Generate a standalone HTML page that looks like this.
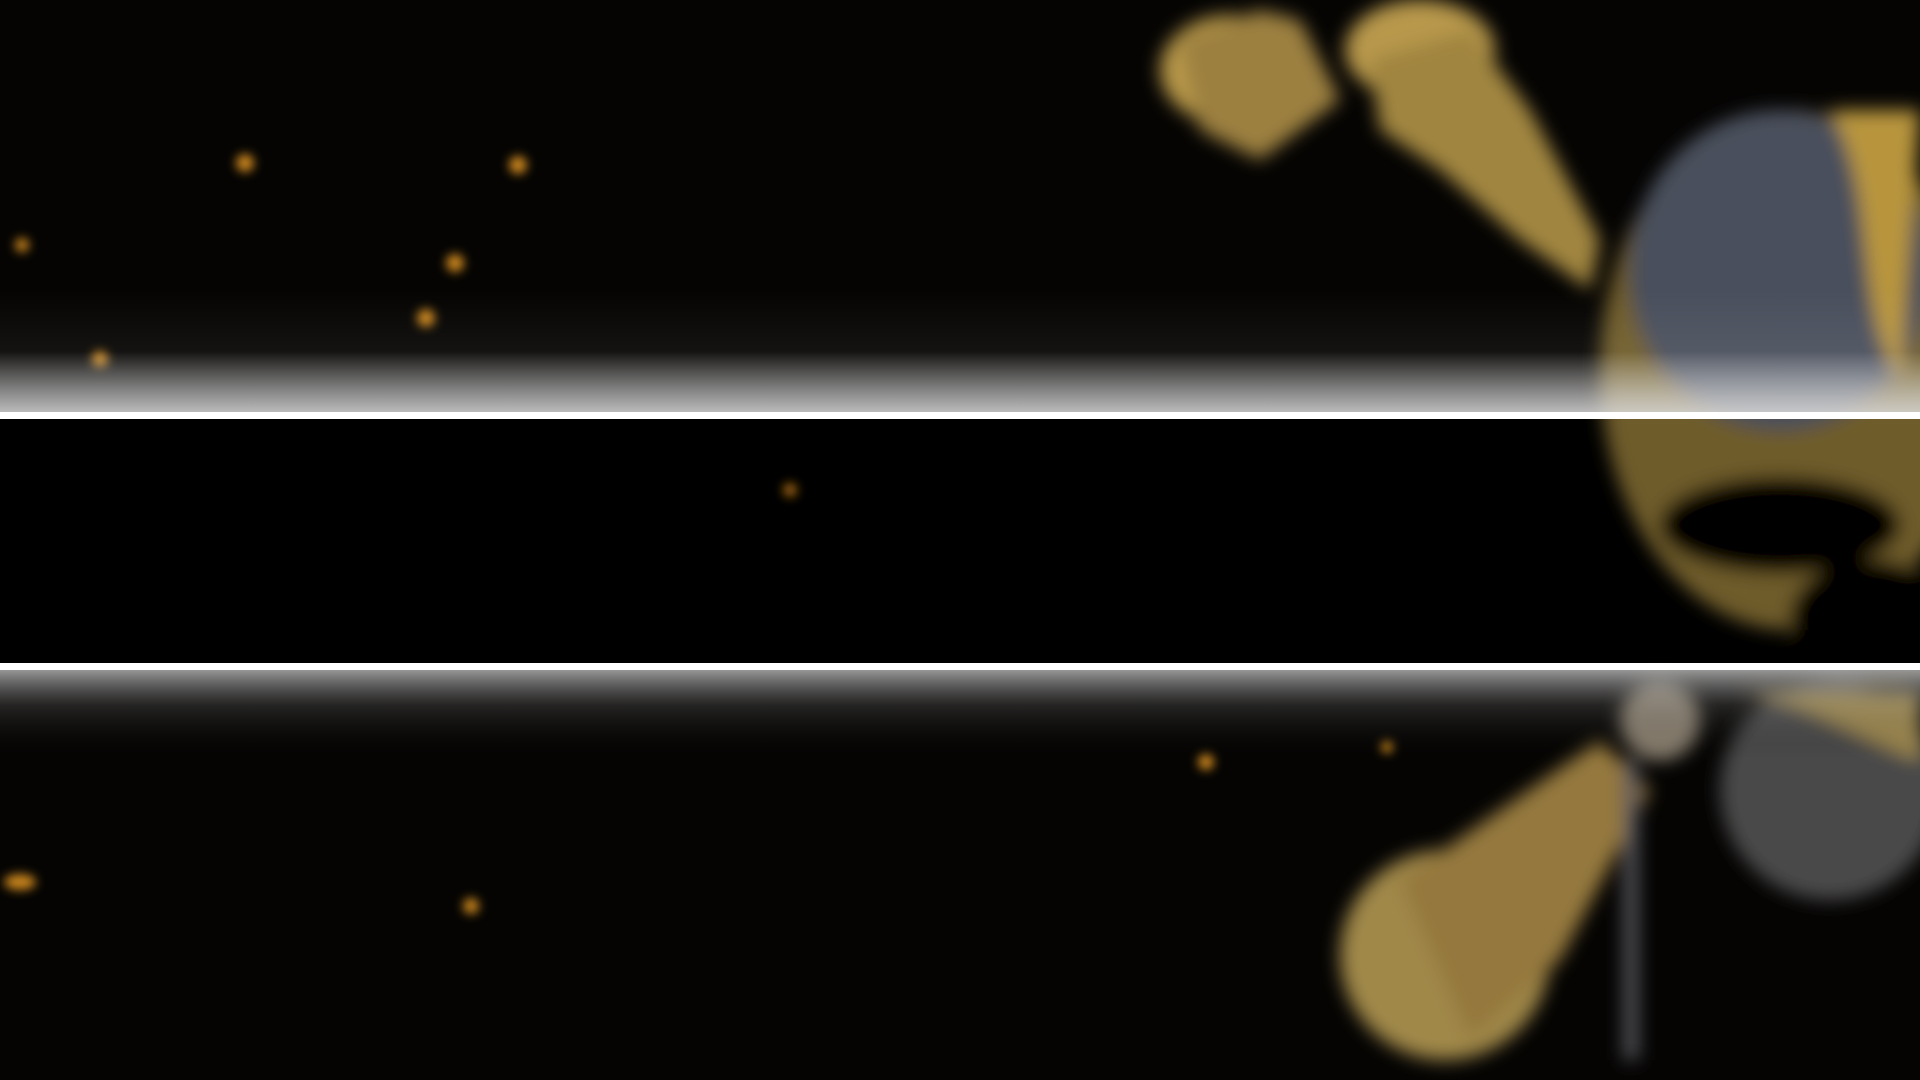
<!DOCTYPE html>
<html><head><meta charset="utf-8"><style>
html,body{margin:0;padding:0;background:#000;width:1920px;height:1080px;overflow:hidden}
svg{display:block}
</style></head><body>
<svg width="1920" height="1080" viewBox="0 0 1920 1080" xmlns="http://www.w3.org/2000/svg">
<defs>
<filter id="b" x="-50%" y="-50%" width="200%" height="200%"><feGaussianBlur stdDeviation="9"/></filter>
<filter id="b2" x="-50%" y="-50%" width="200%" height="200%"><feGaussianBlur stdDeviation="5"/></filter>
<linearGradient id="gt" x1="0" y1="0" x2="0" y2="1">
<stop offset="0" stop-color="#fff" stop-opacity="0"/><stop offset="0.5" stop-color="#fff" stop-opacity="0.06"/><stop offset="1" stop-color="#ddd" stop-opacity="0.85"/></linearGradient>
<linearGradient id="gb" x1="0" y1="0" x2="0" y2="1">
<stop offset="0" stop-color="#ccc" stop-opacity="0.75"/><stop offset="0.4" stop-color="#888" stop-opacity="0.25"/><stop offset="1" stop-color="#000" stop-opacity="0"/></linearGradient>
</defs>
<rect width="1920" height="1080" fill="#050403"/>
<rect y="419" width="1920" height="244" fill="#000"/>
<g filter="url(#b)">
<!-- top bone -->
<ellipse cx="1230" cy="70" rx="70" ry="55" fill="#b89848"/>
<path d="M1180 40 L1260 10 L1300 20 L1340 100 L1260 160 L1200 130 Z" fill="#9c8040"/>
<ellipse cx="1420" cy="50" rx="75" ry="50" fill="#b8984c"/>
<path d="M1370 60 L1470 30 L1530 110 L1600 240 L1590 290 L1520 240 L1440 170 L1380 130 Z" fill="#a08540"/>
<!-- skull -->
<ellipse cx="1790" cy="370" rx="190" ry="260" fill="#6e5c2c"/>
<ellipse cx="1780" cy="270" rx="150" ry="160" fill="#4a4f5c"/>
<path d="M1830 110 C1880 200 1850 300 1900 380 L1920 110 Z" fill="#b8953e"/>
<ellipse cx="1780" cy="525" rx="120" ry="48" fill="#050505"/>
<ellipse cx="1870" cy="620" rx="80" ry="60" fill="#050505"/>
<ellipse cx="1830" cy="790" rx="110" ry="110" fill="#4a4a48"/>
<path d="M1740 690 C1800 700 1860 740 1920 760 L1920 690 Z" fill="#a08a50"/>
<ellipse cx="1660" cy="720" rx="40" ry="40" fill="#8a8070"/>
<!-- bottom bone -->
<ellipse cx="1445" cy="955" rx="105" ry="105" fill="#a08848"/>
<path d="M1400 880 L1600 740 L1650 790 L1560 960 L1470 1040 Z" fill="#94783c"/>
<rect x="1624" y="760" width="14" height="300" fill="#5a5a60"/>
</g>
<g filter="url(#b2)" fill="#c8841c">
<circle cx="245" cy="163" r="9"/><circle cx="518" cy="165" r="9"/><circle cx="22" cy="245" r="7"/>
<circle cx="455" cy="263" r="9"/><circle cx="426" cy="318" r="9"/><circle cx="100" cy="359" r="8"/>
<circle cx="790" cy="490" r="7" fill="#9a6010"/><circle cx="1206" cy="762" r="8"/><circle cx="471" cy="906" r="8"/>
<ellipse cx="20" cy="882" rx="16" ry="8"/><circle cx="1387" cy="747" r="6"/>
</g>
<rect y="290" width="1920" height="123" fill="url(#gt)"/>
<rect y="669" width="1920" height="90" fill="url(#gb)"/>
<rect y="412" width="1920" height="7" fill="#fff"/>
<rect y="663" width="1920" height="7" fill="#fff"/>
</svg>
</body></html>
